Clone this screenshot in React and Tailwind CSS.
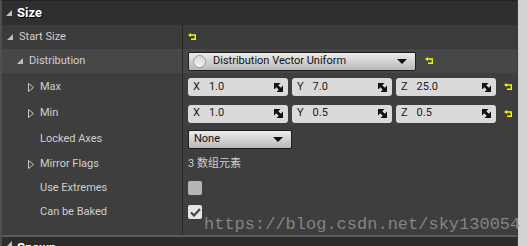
import React from "react";

const ResetIcon = () => (
    <svg width="9" height="8" viewBox="0 0 9 8" className="shrink-0">
        <path d="M0 2 L3 0 L3 1.3 L8 1.3 L8 7 L3 7 L3 5.6 L6.6 5.6 L6.6 2.7 L3 2.7 L3 4 Z" fill="#f5f500" />
    </svg>
);

const SpinIcon = () => (
    <svg width="9" height="9" viewBox="0 0 9 9" className="shrink-0">
        <polygon points="0,0 6.5,0 0,6.5" fill="#111" />
        <polygon points="9,2.5 9,9 2.5,9" fill="#111" />
        <polygon points="2,4 4,2 7,5 7,7 5,7" fill="#111" />
    </svg>
);

const Expanded = () => <span className="w-[6px] h-[6px] bg-[#bdbdbd] [clip-path:polygon(100%_0,100%_100%,0_100%)] shrink-0" />;

const Collapsed = () => (
    <svg width="6" height="9" viewBox="0 0 6 9" className="shrink-0">
        <path d="M0.5 0.5 L5.5 4.5 L0.5 8.5 Z" fill="none" stroke="#c8c8c8" strokeWidth="1" />
    </svg>
);

const Label = ({ pad, icon, children }) => (
    <div className="w-[180px] shrink-0 flex items-center gap-[6px]" style={{ paddingLeft: pad }}>
        {icon === "open" && <Expanded />}
        {icon === "closed" && <Collapsed />}
        {icon === "none" && <span className="w-[6px]" />}
        <span>{children}</span>
    </div>
);

const Field = ({ axis, value }) => (
    <div className="w-[100px] h-[18px] rounded-[3px] bg-[#dadada] flex items-center px-[5px] text-[#1a1a1a]">
        <span>{axis}</span>
        <span className="ml-[9px] flex-1">{value}</span>
        <SpinIcon />
    </div>
);

const Row = ({ h, bg = "", children }) => (
    <div className={`shrink-0 flex items-stretch ${bg}`} style={{ height: h }}>
        {children}
    </div>
);

const Value = ({ children }) => (
    <div className="flex-1 flex items-center gap-[4px] border-l border-[#262626] pl-[5px]">{children}</div>
);

const Dropdown = ({ width, children, circle }) => (
    <div
        className="h-[19px] rounded-[2px] border border-[#1e1e1e] bg-gradient-to-b from-[#ececec] to-[#b9b9b9] flex items-center px-[4px] text-[#111]"
        style={{ width }}
    >
        {circle && <span className="w-[13px] h-[13px] rounded-full border border-[#9a9a9a] bg-gradient-to-b from-[#d8d8d8] to-[#f4f4f4] mr-[6px]" />}
        <span className="flex-1 pl-[1px]">{children}</span>
        <span className="w-0 h-0 border-l-[5px] border-r-[5px] border-t-[5px] border-l-transparent border-r-transparent border-t-[#111] mr-[4px]" />
    </div>
);

export default function App() {
    return (
        <div className="w-[527px] h-[246px] overflow-hidden flex bg-[#3e3e3e] font-['Roboto',sans-serif] text-[11px] text-[#cfcfcf] relative">
            <div className="w-[517px] flex flex-col border-l-[2px] border-[#4f4f4f]">
                <div className="shrink-0 h-[25px] flex items-center gap-[5px] pl-[4px] bg-[#2f2f2f] border-t border-[#222]">
                    <Expanded />
                    <span className="text-[13px] font-bold text-white [text-shadow:1px_1px_0_#000]">Size</span>
                </div>
                <Row h={24} bg="bg-[#3b3b3b]">
                    <Label pad={5} icon="open">Start Size</Label>
                    <Value><ResetIcon /></Value>
                </Row>
                <Row h={24} bg="bg-[#474747]">
                    <Label pad={15} icon="open">Distribution</Label>
                    <Value>
                        <Dropdown width={228} circle>Distribution Vector Uniform</Dropdown>
                        <span className="ml-[5px]"><ResetIcon /></span>
                    </Value>
                </Row>
                <Row h={28}>
                    <Label pad={26} icon="closed">Max</Label>
                    <Value>
                        <Field axis="X" value="1.0" />
                        <Field axis="Y" value="7.0" />
                        <Field axis="Z" value="25.0" />
                        <span className="ml-[4px]"><ResetIcon /></span>
                    </Value>
                </Row>
                <Row h={25}>
                    <Label pad={26} icon="closed">Min</Label>
                    <Value>
                        <Field axis="X" value="1.0" />
                        <Field axis="Y" value="0.5" />
                        <Field axis="Z" value="0.5" />
                        <span className="ml-[4px]"><ResetIcon /></span>
                    </Value>
                </Row>
                <Row h={26}>
                    <Label pad={26} icon="none">Locked Axes</Label>
                    <Value>
                        <Dropdown width={104}>None</Dropdown>
                    </Value>
                </Row>
                <Row h={24}>
                    <Label pad={26} icon="closed">Mirror Flags</Label>
                    <Value>
                        <span className="font-['Roboto','Noto_Sans_CJK_SC',sans-serif]">3 数组元素</span>
                    </Value>
                </Row>
                <Row h={24}>
                    <Label pad={26} icon="none">Use Extremes</Label>
                    <Value>
                        <span className="w-[14px] h-[14px] rounded-[2px] bg-[#b5b5b5]" />
                    </Value>
                </Row>
                <Row h={24}>
                    <Label pad={26} icon="none">Can be Baked</Label>
                    <Value>
                        <span className="w-[14px] h-[14px] rounded-[2px] bg-[#e6e6e6] flex items-center justify-center">
                            <svg width="11" height="9" viewBox="0 0 11 9">
                                <path d="M1 4.5 L4 7.5 L10 1" fill="none" stroke="#444" strokeWidth="2.2" />
                            </svg>
                        </span>
                    </Value>
                </Row>
                <Row h={11}>
                    <div className="w-[180px]" />
                    <div className="flex-1 border-l border-[#262626]" />
                </Row>
                <div className="shrink-0 h-[2px] bg-[#5c5c5c]" />
                <div className="shrink-0 h-[20px] bg-[#2c2c2c] flex items-start gap-[5px] pl-[4px] pt-[4px]">
                    <Expanded />
                    <span className="text-[13px] font-bold text-white leading-none">Spawn</span>
                </div>
            </div>
            <div className="w-[10px] bg-[#d3d3d3] border-l border-[#3a3a3a]" />
            <div className="absolute left-[204px] top-[212px] font-['Liberation_Mono',monospace] text-[17px] text-[#8c8c8c] opacity-90 pointer-events-none">
                https://blog.csdn.net/sky130054
            </div>
        </div>
    );
}
